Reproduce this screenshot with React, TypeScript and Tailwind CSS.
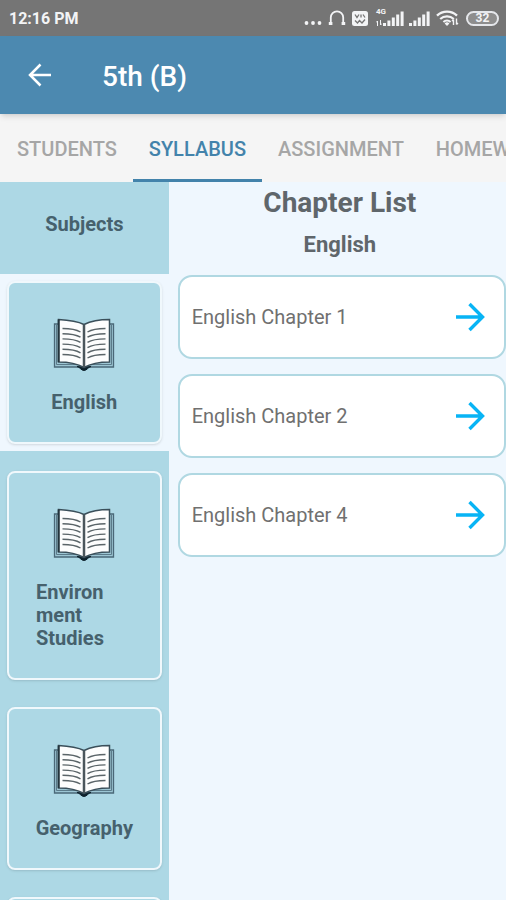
const tabs = ["Students", "Syllabus", "Assignment", "Homework"]

const subjects = ["English", "Environ\nment Studies", "Geography", "Mathematics"]

const chapters = ["English Chapter 1", "English Chapter 2", "English Chapter 4"]

function Signal() {
    return (
        <svg viewBox="0 0 21 15" className="w-[21px] h-[15px]" fill="currentColor" aria-hidden="true">
            <rect x="0" y="12" width="3" height="3" />
            <rect x="4.4" y="9.5" width="3" height="5.5" />
            <rect x="8.8" y="6.5" width="3" height="8.5" />
            <rect x="13.2" y="3.5" width="3" height="11.5" />
            <rect x="17.6" y="0.5" width="3" height="14.5" />
        </svg>
    )
}

function StatusBar() {
    return (
        <div className="flex h-9 shrink-0 items-center justify-between bg-[#757575] pl-[9px] pr-[7px] text-gray-100">
            <span className="pt-0.5 text-base font-bold">12:16 PM</span>
            <div className="flex items-center">
                <svg viewBox="0 0 18 16" className="mr-[6px] w-[18px] h-4" fill="currentColor" aria-hidden="true">
                    <circle cx="2.5" cy="13" r="1.9" />
                    <circle cx="9" cy="13" r="1.9" />
                    <circle cx="15.5" cy="13" r="1.9" />
                </svg>
                <svg viewBox="0 0 18 16" className="mr-[6px] w-[18px] h-4" fill="none" stroke="currentColor" aria-hidden="true">
                    <path d="M2.8 13V7.5a6.2 6.2 0 0 1 12.4 0V13" strokeWidth="1.8" />
                    <path d="M0.8 13.6h3.6M13.6 13.6h3.6" strokeWidth="3" />
                </svg>
                <svg viewBox="0 0 16 15" className="mr-2 w-4 h-[15px]" aria-hidden="true">
                    <rect width="16" height="15" rx="2.5" fill="currentColor" />
                    <path d="M3 3.5l2 3 2-3M9 3.5v3M11 3.5l2 3M3 9.5l2.5 2.5 2-2.5 2.5 2.5 3-3.5" stroke="#757575" strokeWidth="1.3" fill="none" />
                </svg>
                <div className="relative mr-[5px] pl-[7px]">
                    <span className="absolute left-0 -top-1 text-[8px] leading-[10px] font-bold">4G</span>
                    <svg viewBox="0 0 6 6" className="absolute left-0 bottom-0 w-[6px] h-[6px]" stroke="currentColor" fill="none" aria-hidden="true">
                        <path d="M1.5 6V1M0 2.5L1.5 1M4.5 0v5M6 3.5L4.5 5" />
                    </svg>
                    <Signal />
                </div>
                <div className="mr-[6px]">
                    <Signal />
                </div>
                <svg viewBox="0 0 24 16" className="mr-[6px] w-6 h-4" fill="none" stroke="currentColor" aria-hidden="true">
                    <path d="M1 5.6a14.5 14.5 0 0 1 20 0" strokeWidth="2.4" />
                    <path d="M4.2 9a10 10 0 0 1 13.6 0" strokeWidth="2.2" />
                    <path d="M7.4 12a5.4 5.4 0 0 1 7.2 0" strokeWidth="2" />
                    <path d="M11 16l-2.4-2.6a3.6 3.6 0 0 1 4.8 0z" fill="currentColor" stroke="none" />
                    <path d="M17.5 15V9.5M16 11l1.5-1.500M20.500 8.500v6M22 13l-1.500 1.500" strokeWidth="1.4" />
                </svg>
                <span className="flex h-[15px] w-[33px] items-center justify-center rounded-full border-2 border-gray-200 bg-[#8e8e8e] text-[12px] leading-[12px] font-bold">
                    32
                </span>
            </div>
        </div>
    )
}

function Book() {
    return (
        <svg viewBox="0 0 62 54" className="h-[54px] w-[62px]" fill="none" aria-hidden="true">
            <path d="M5 6H1.500V49H60.500V6H57" fill="#9cc6d4" stroke="#4a6878" strokeWidth="1.300" />
            <path d="M3.500 7V46.500H26M58.500 7V46.500H36" stroke="#5b7b8a" />
            <path d="M24 48.500l4 .5 3 1 3-1 4-.5c-3 .5-4 4-7 4s-4-3.500-7-4z" fill="#0e222d" stroke="#0e222d" />
            <path d="M5.500 1.500C15 2 24 3 31 6.500C38 3 47 1.500 56.500 1.500V44C47 44 38 45.500 31 49.500C24 45.500 15 44 5.500 44z" fill="#fdfdfd" stroke="#3a4f5a" strokeWidth="1.500" />
            <path d="M5.700 1.500V44" stroke="#22343d" strokeWidth="2" />
            <path d="M31 6.500V49" stroke="#4b565c" strokeWidth="2.500" />
            <g stroke="#5a6468" strokeWidth="1.400">
                <path d="M9.500 10.500c7 0 13 .5 18 3.500M9.500 15.700c7 0 13 .5 18 3.500M9.500 20.900c7 0 13 .5 18 3.500M9.500 26.100c7 0 13 .5 18 3.500M9.500 31.300c7 0 13 .5 18 3.500M9.500 36.500c7 0 13 .5 18 3.500" />
                <path d="M52.500 10.500c-7 0-13 .5-18 3.500M52.500 15.700c-7 0-13 .5-18 3.500M52.500 20.900c-7 0-13 .5-18 3.500M52.500 26.100c-7 0-13 .5-18 3.500M52.500 31.300c-7 0-13 .5-18 3.500M52.500 36.500c-7 0-13 .5-18 3.500" />
            </g>
        </svg>
    )
}

export default function App() {
    return (
        <div className="flex h-screen flex-col overflow-hidden bg-[#eff7fe] font-[Roboto,sans-serif]">
            <StatusBar />
            <header className="relative z-10 flex h-[78px] shrink-0 items-center bg-[#4c89b0] pl-7 text-white shadow-md">
                <button aria-label="Back" className="mr-[50px]">
                    <svg viewBox="0 0 24 24" className="h-6 w-6" fill="none" stroke="currentColor" strokeWidth="2.5" aria-hidden="true">
                        <path d="M23 12H2M12.500 1.500L2 12l10.500 10.500" />
                    </svg>
                </button>
                <h1 className="pt-1 text-[28px] font-medium">5th (B)</h1>
            </header>
            <nav className="flex h-[68px] shrink-0 overflow-hidden bg-[#f5f5f5] pl-px">
                {tabs.map((tab) => (
                    <button
                        key={tab}
                        className={
                            tab === "Syllabus"
                                ? "border-b-[3px] border-[#4383ab] px-4 pt-1 text-xl font-medium uppercase text-[#4383ab]"
                                : "border-b-[3px] border-transparent px-4 pt-1 text-xl font-medium uppercase text-[#a6a6a6]"
                        }
                    >
                        {tab}
                    </button>
                ))}
            </nav>
            <div className="flex min-h-0 flex-1">
                <aside className="w-1/3 overflow-y-auto bg-[#add8e5] text-[#46616d] [scrollbar-width:none]">
                    <h2 className="pt-[31px] pb-[38px] text-center text-xl leading-[23px] font-bold">Subjects</h2>
                    <div className="flex flex-col gap-[13px]">
                        {subjects.map((subject) => (
                            <div key={subject} className={subject === "English" ? "bg-[#eff7fe] p-[7px]" : "p-[7px]"}>
                                <button className="flex w-full flex-col items-center gap-[19px] rounded-lg border-2 border-[#f0f8fc] bg-[#add8e5] px-[27px] pt-[35px] pb-7 shadow">
                                    <Book />
                                    <span className="min-w-[66px] whitespace-pre-line text-left text-xl leading-[23px] font-bold">
                                        {subject}
                                    </span>
                                </button>
                            </div>
                        ))}
                    </div>
                </aside>
                <main className="flex-1 overflow-y-auto pl-[9px] text-[#5f666b] [scrollbar-width:none]">
                    <h2 className="pt-1 pr-1 text-center text-[28px] leading-[34px] font-bold">Chapter List</h2>
                    <h3 className="pt-3 pr-1 pb-[17px] text-center text-[22px] leading-[26px] font-bold">English</h3>
                    <div className="flex flex-col gap-[15px]">
                        {chapters.map((chapter) => (
                            <button
                                key={chapter}
                                className="flex h-[84px] items-center justify-between rounded-[14px] border-2 border-[#b0d8e2] bg-white pl-3 pr-[19px] text-xl text-[#707070]"
                            >
                                {chapter}
                                <svg viewBox="0 0 30 30" className="h-[30px] w-[30px]" fill="none" stroke="#08b4f5" strokeWidth="3.4" aria-hidden="true">
                                    <path d="M1 15H27M14.500 2L27.500 15L14.500 28" />
                                </svg>
                            </button>
                        ))}
                    </div>
                </main>
            </div>
        </div>
    )
}
